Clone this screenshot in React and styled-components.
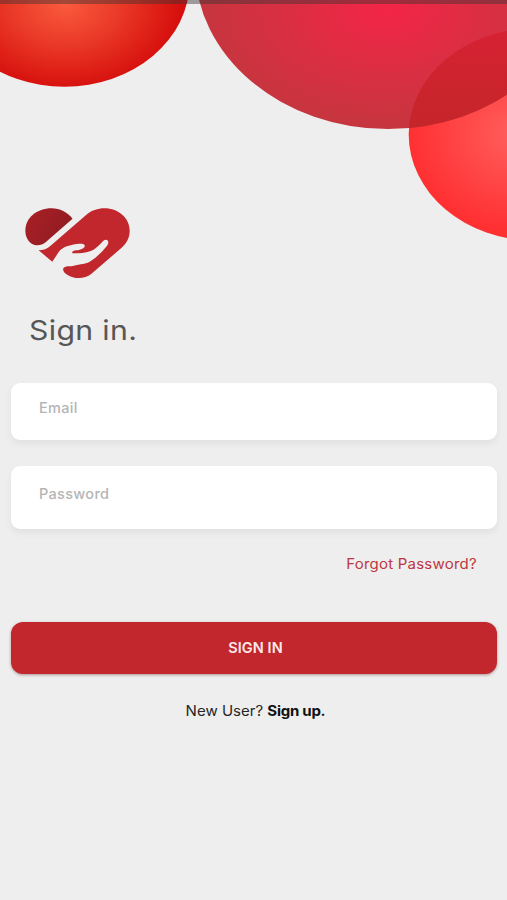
import React from 'react';
import styled, { createGlobalStyle } from 'styled-components';

const GlobalStyle = createGlobalStyle`
  * { box-sizing: border-box; }
  body { margin: 0; background: #eeeeee; }
`;

const Screen = styled.main`
  position: relative;
  display: flex;
  flex-direction: column;
  height: 900px;
  overflow: hidden;
  padding: 208px 10px 0 11px;
  background: #eeeeee;
  font-family: Inter, 'Liberation Sans', sans-serif;
`;

const Backdrop = styled.svg`
  position: absolute;
  top: 0;
  left: 0;
`;

const StatusBar = styled.div`
  position: absolute;
  top: 0;
  left: 0;
  right: 0;
  height: 4px;
  background: rgba(60, 50, 50, 0.45);
`;

const Logo = styled.svg`
  display: block;
  flex: none;
  width: 105px;
  height: 71px;
  margin-left: 14px;
`;

const Title = styled.h1`
  align-self: flex-start;
  margin: 33px 0 0 18px;
  font-size: 27.5px;
  line-height: 36px;
  font-weight: 400;
  letter-spacing: 0.3px;
  color: #575757;
  transform: scaleX(1.1);
  transform-origin: left;
`;

const Form = styled.form`
  display: flex;
  flex-direction: column;
`;

const Field = styled.input`
  height: ${(p) => p.$height}px;
  margin-top: ${(p) => p.$gap}px;
  padding: 0 28px ${(p) => p.$lift}px;
  border: 0;
  border-radius: 9px;
  outline: 0;
  background: #fff;
  box-shadow: 0 4px 7px rgba(0, 0, 0, 0.055);
  font: 500 14.5px/20px Inter, 'Liberation Sans', sans-serif;
  letter-spacing: 0.3px;
  color: #444;
  &::placeholder { color: #b5b5b5; opacity: 1; }
`;

const ForgotLink = styled.a`
  align-self: flex-end;
  margin: 25px 20px 0 0;
  font-size: 14px;
  line-height: 20px;
  letter-spacing: 0.2px;
  color: #bd3640;
  transform: scaleX(1.072);
  transform-origin: right;
`;

const SubmitButton = styled.button`
  height: 52px;
  margin-top: 48px;
  padding: 0 0 1px 3px;
  border: 0;
  border-radius: 12px;
  background: #c1272d;
  box-shadow: 0 1px 3px rgba(80, 20, 20, 0.42);
  font: 600 14.5px/20px Inter, 'Liberation Sans', sans-serif;
  letter-spacing: 0.1px;
  color: #fbe9e9;
`;

const Signup = styled.p`
  margin: 27px 0 0 3px;
  text-align: center;
  font-size: 14px;
  line-height: 20px;
  color: #262626;
  transform: scaleX(1.073);
`;

const SignupLink = styled.a`
  font-weight: 700;
  letter-spacing: -0.25px;
  color: #111;
`;

function Bubbles() {
  return (
    <Backdrop width="507" height="250" viewBox="0 0 507 250" aria-hidden="true">
      <defs>
        <radialGradient id="orange" gradientUnits="userSpaceOnUse" cx="0" cy="0" r="1" gradientTransform="translate(65 4) scale(116 86)">
          <stop offset="0" stopColor="#fa5b3d" />
          <stop offset="0.5" stopColor="#e93726" />
          <stop offset="1" stopColor="#d60f0d" />
        </radialGradient>
        <radialGradient id="pink" gradientUnits="userSpaceOnUse" cx="0" cy="0" r="1" gradientTransform="translate(387 8) scale(190 122)">
          <stop offset="0" stopColor="#f32546" />
          <stop offset="0.5" stopColor="#dc2e43" />
          <stop offset="1" stopColor="#c5363e" />
        </radialGradient>
        <radialGradient id="coral" gradientUnits="userSpaceOnUse" cx="0" cy="0" r="1" gradientTransform="translate(516 134) scale(106 96)">
          <stop offset="0" stopColor="#ff5f5d" />
          <stop offset="1" stopColor="#ff3032" />
        </radialGradient>
        <linearGradient id="overlap" gradientUnits="userSpaceOnUse" x1="0" y1="28" x2="0" y2="128">
          <stop offset="0" stopColor="#d72133" />
          <stop offset="1" stopColor="#c4262a" />
        </linearGradient>
        <clipPath id="pinkShape"><ellipse cx="388" cy="-33" rx="193" ry="162" /></clipPath>
      </defs>
      <ellipse cx="64.5" cy="-18.3" rx="125" ry="105" fill="url(#orange)" />
      <ellipse cx="534.7" cy="134.5" rx="126" ry="106" fill="url(#coral)" />
      <ellipse cx="388" cy="-33" rx="193" ry="162" fill="url(#pink)" />
      <ellipse cx="534.7" cy="134.5" rx="126" ry="106" fill="url(#overlap)" clipPath="url(#pinkShape)" />
    </Backdrop>
  );
}

function HeartLogo() {
  return (
    <Logo viewBox="45 38 316 213" preserveAspectRatio="none" role="img" aria-label="Heart and hand">
      <defs>
        <linearGradient id="lobe" x1="0" y1="0.2" x2="1" y2="0.6">
          <stop offset="0" stopColor="#a81f26" />
          <stop offset="1" stopColor="#8f1c21" />
        </linearGradient>
      </defs>
      <path fill="url(#lobe)" d="M188 70C172 50 150 39 125 39C80 39 46 68 46 106C46 128 58 144 74 149C86 152 98 148 108 140Z" />
      <path fill="#c1272d" d="M86 165C100 165 112 160 122 151L228 60C245 45 264 39 284 39C328 39 360 70 360 106C360 128 350 144 335 158L245 235C225 251 195 253 172 238C162 232 157 224 161 218C168 211 178 214 189 212C214 206 228 207 242 198C260 186 277 170 292 151C302 136 290 128 280 137C268 151 256 162 243 167C226 173 208 174 189 174C183 171 190 166 200 165C214 163 224 159 225 151C224 143 207 145 188 148C173 151 156 157 148 168L127 199Z" />
    </Logo>
  );
}

export default function App() {
  return (
    <>
      <GlobalStyle />
      <Screen>
        <Bubbles />
        <StatusBar />
        <HeartLogo />
        <Title>Sign in.</Title>
        <Form onSubmit={(e) => e.preventDefault()}>
          <Field type="email" placeholder="Email" aria-label="Email" $height={57} $gap={35} $lift={8} />
          <Field type="password" placeholder="Password" aria-label="Password" $height={63} $gap={26} $lift={8} />
          <ForgotLink>Forgot Password?</ForgotLink>
          <SubmitButton type="submit">SIGN IN</SubmitButton>
        </Form>
        <Signup>
          New User? <SignupLink>Sign up.</SignupLink>
        </Signup>
      </Screen>
    </>
  );
}
